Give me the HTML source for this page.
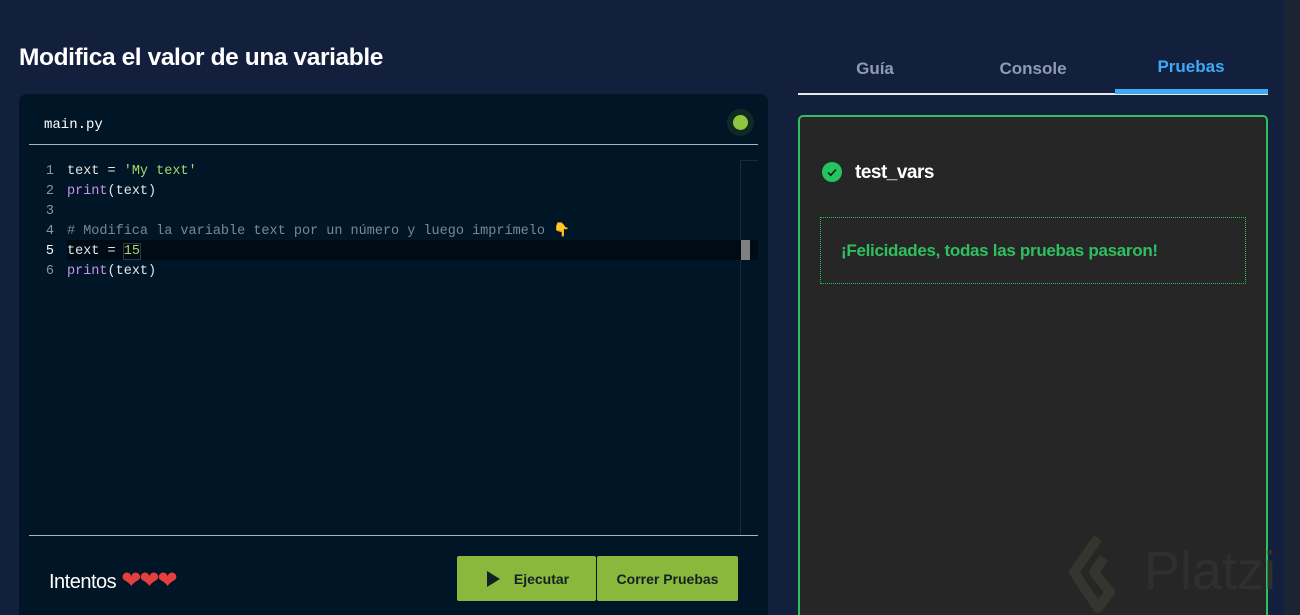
<!DOCTYPE html>
<html><head><meta charset="utf-8"><style>
*{margin:0;padding:0;box-sizing:border-box}
html,body{width:1300px;height:615px;overflow:hidden}
body{background:#121f3d;font-family:"Liberation Sans",sans-serif;position:relative}
.abs{position:absolute}
h1{position:absolute;left:19px;top:44px;font-size:24.5px;font-weight:bold;color:#fff;letter-spacing:-0.4px}
.ed{left:19px;top:94px;width:749px;height:521px;background:#001526;border-radius:8px 8px 0 0}
.mono{font-family:"Liberation Mono","DejaVu Sans Mono",monospace;font-size:13.5px}
.code div{height:20px;line-height:20px;white-space:pre;color:#e6e6e6}
.nums div{height:20px;line-height:20px;color:#8a94a0;text-align:right;width:54px}
.btn{background:#8ab83d;color:#122;font-weight:bold;font-size:14px;border-radius:2px;display:flex;align-items:center;justify-content:center;height:45px;top:556px}
.tab{top:59px;font-size:17px;font-weight:bold;color:#8e9bb5;width:150px;text-align:center}
</style></head><body>
<h1>Modifica el valor de una variable</h1>
<div class="abs ed"></div>
<div class="abs mono" style="left:44px;top:117px;color:#fff;font-size:14px">main.py</div>
<div class="abs" style="left:727px;top:109px;width:27px;height:27px;border-radius:50%;background:#0f2a22"></div>
<div class="abs" style="left:733px;top:115px;width:15px;height:15px;border-radius:50%;background:#8ec63f"></div>
<div class="abs" style="left:29px;top:144px;width:729px;height:1px;background:#a9b3c0"></div>
<div class="abs" style="left:740px;top:160px;width:1px;height:375px;background:#1d2a36"></div>
<div class="abs" style="left:740px;top:160px;width:18px;height:1px;background:#1d2a36"></div>
<div class="abs" style="left:67px;top:240px;width:691px;height:20px;background:#000c15"></div>
<div class="abs" style="left:741px;top:240px;width:9px;height:20px;background:#808080"></div>
<div class="abs nums mono" style="left:0;top:162px"><div>1</div><div>2</div><div>3</div><div>4</div><div style="color:#fff">5</div><div>6</div></div>
<div class="abs code mono" style="left:67px;top:162px">
<div>text = <span style="color:#a5d86b">'My text'</span></div>
<div><span style="color:#c792ea">print</span>(text)</div>
<div> </div>
<div><span style="color:#7c8792"># Modifica la variable text por un número y luego imprímelo </span><span style="color:#f5b82e">👇</span></div>
<div>text = <span style="color:#a5d86b;outline:1px solid #2a3a3a">15</span></div>
<div><span style="color:#c792ea">print</span>(text)</div>
</div>
<div class="abs" style="left:29px;top:535px;width:729px;height:1px;background:#a9b3c0"></div>
<div class="abs" style="left:49px;top:566px;color:#fff;font-size:20px;letter-spacing:-0.5px">Intentos <span style="color:#e53e3e;font-size:24px;letter-spacing:-2px">❤❤❤</span></div>
<div class="abs btn" style="left:457px;width:139px"><svg width="18" height="18" viewBox="0 0 18 18" style="margin-right:12px"><path d="M3 1L16 9L3 17Z" fill="#122"/></svg>Ejecutar</div>
<div class="abs btn" style="left:597px;width:141px">Correr Pruebas</div>

<div class="abs tab" style="left:800px">Guía</div>
<div class="abs tab" style="left:958px">Console</div>
<div class="abs tab" style="left:1116px;top:57px;color:#3fa9f5">Pruebas</div>
<div class="abs" style="left:798px;top:93px;width:470px;height:2px;background:#e8e8e8"></div>
<div class="abs" style="left:1115px;top:89px;width:153px;height:5px;background:#3fa9f5"></div>
<div class="abs" style="left:798px;top:115px;width:470px;height:520px;background:#262626;border:2px solid #2fbf5f;border-radius:5px"></div>
<svg class="abs" style="left:1068px;top:534px" width="70" height="80" viewBox="0 0 70 80"><path d="M30 4L6 38L30 74L42 58L26 38L36 24" fill="none" stroke="#33362f" stroke-width="10" stroke-linejoin="round"/></svg>
<div class="abs" style="left:1144px;top:540px;font-size:54px;color:#2e302e">Platzi</div>
<div class="abs" style="left:1284px;top:0;width:16px;height:615px;background:#1c2333"></div>
<svg class="abs" style="left:822px;top:162px" width="20" height="20" viewBox="0 0 20 20"><circle cx="10" cy="10" r="10" fill="#22c55e"/><path d="M6 10.5l2.8 2.7L14 7.5" fill="none" stroke="#1a1a1a" stroke-width="1.6"/></svg>
<div class="abs" style="left:855px;top:162px;color:#fff;font-weight:bold;font-size:19px;letter-spacing:-0.5px">test_vars</div>
<div class="abs" style="left:820px;top:217px;width:426px;height:67px;border:1px dotted #2fbf5f"></div>
<div class="abs" style="left:841px;top:241px;color:#2fbf5f;font-weight:bold;font-size:17px;letter-spacing:-0.3px">¡Felicidades, todas las pruebas pasaron!</div>
</body></html>
